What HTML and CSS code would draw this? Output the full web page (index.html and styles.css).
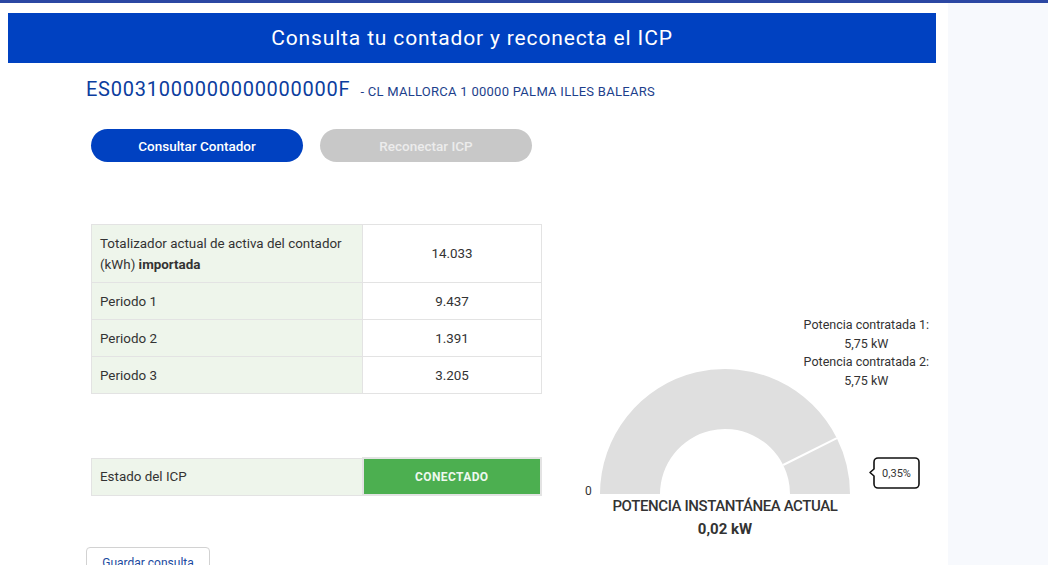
FILE: index.html
```html
<!DOCTYPE html>
<html lang="es">
<head>
<meta charset="utf-8">
<title>Consulta tu contador y reconecta el ICP</title>
<link rel="stylesheet" href="styles.css">
</head>
<body>
<div class="topbar"></div>
<div class="page">
  <main class="main">
    <h1 class="header">Consulta tu contador y reconecta el ICP</h1>
    <div class="supply">
      <span class="cups">ES0031000000000000000F</span>
      <span class="address">- CL MALLORCA 1 00000 PALMA ILLES BALEARS</span>
    </div>
    <div class="actions">
      <button class="pill pill-primary">Consultar Contador</button>
      <button class="pill pill-disabled">Reconectar ICP</button>
    </div>
    <div class="content">
      <div class="left">
        <table class="grid-table readings">
          <tr class="row-tall">
            <th>Totalizador actual de activa del contador (kWh) <b>importada</b></th>
            <td>14.033</td>
          </tr>
          <tr><th>Periodo 1</th><td>9.437</td></tr>
          <tr><th>Periodo 2</th><td>1.391</td></tr>
          <tr><th>Periodo 3</th><td>3.205</td></tr>
        </table>
        <table class="grid-table status">
          <tr><th>Estado del ICP</th><td class="ok">CONECTADO</td></tr>
        </table>
        <button class="save">Guardar consulta</button>
      </div>
      <div class="chart">
        <div class="chart-stack">
          <div class="legend">
            <div class="legend-box">
              <div>Potencia contratada 1:</div>
              <div>5,75 kW</div>
              <div>Potencia contratada 2:</div>
              <div>5,75 kW</div>
            </div>
          </div>
          <svg class="gauge" width="361" height="185" viewBox="0 0 361 185">
            <path d="M25 178 A125 125 0 0 1 261.86 122.22 L208.17 148.99 A65 65 0 0 0 85 178 Z" fill="#dfdfdf"/>
            <path d="M261.86 122.22 A125 125 0 0 1 275 178 L215 178 A65 65 0 0 0 208.17 148.99 Z" fill="#dfdfdf"/>
            <line x1="261.86" y1="122.22" x2="208.17" y2="148.99" stroke="#ffffff" stroke-width="2"/>
            <text x="10" y="179" class="gauge-zero">0</text>
            <path d="M303 142 H340 A4 4 0 0 1 344 146 V168 A4 4 0 0 1 340 172 H303 A4 4 0 0 1 299 168 V160 L295 156.5 L299 153 V146 A4 4 0 0 1 303 142 Z" fill="#ffffff" stroke="#111111" stroke-width="1.6" stroke-linejoin="round"/>
            <text x="321.5" y="161" text-anchor="middle" class="gauge-tip">0,35%</text>
          </svg>
        </div>
        <div class="reading">
          <div class="reading-title">POTENCIA INSTANTÁNEA ACTUAL</div>
          <div class="reading-value">0,02 kW</div>
        </div>
      </div>
    </div>
  </main>
  <aside class="side"></aside>
</div>
</body>
</html>
```
FILE: styles.css
```css
* { box-sizing: border-box; }
html, body { margin: 0; padding: 0; height: 100%; overflow: hidden; }
body {
  font-family: Roboto, "Liberation Sans", Arial, sans-serif;
  color: #333333;
  background: #ffffff;
}
.topbar { height: 3px; background: #2b47a3; }
.page { display: flex; height: 562px; }
.main { width: 936px; padding-top: 10px; }
.side { flex: 1; margin-left: 12px; background: #f7f9fd; }

.header {
  margin: 0 0 0 8px;
  height: 50px;
  background: #0041c1;
  color: #ffffff;
  font-size: 21px;
  font-weight: 400;
  letter-spacing: 0.85px;
  display: flex;
  align-items: center;
  justify-content: center;
}

.supply {
  margin-top: 14px;
  padding-left: 86px;
  display: flex;
  align-items: baseline;
  gap: 10px;
  height: 24px;
}
.cups { font-size: 20px; color: #0b3d9e; letter-spacing: 0.75px; }
.address { font-size: 13px; color: #1d3f8c; letter-spacing: 0.27px; }

.actions {
  margin-top: 28px;
  padding-left: 91px;
  display: flex;
  gap: 17px;
}
.pill {
  width: 212px;
  height: 33px;
  border: none;
  border-radius: 17px;
  font-family: inherit;
  font-size: 13.5px;
  font-weight: 500;
}
.pill-primary { background: #0041c1; color: #ffffff; }
.pill-disabled { background: #c8c8c8; color: #ececec; }

.content {
  margin-top: 62px;
  display: flex;
  gap: 33px;
}
.left { padding-left: 91px; display: flex; flex-direction: column; align-items: flex-start; }

.grid-table {
  width: 451px;
  border-collapse: collapse;
  font-size: 13.4px;
  color: #333333;
}
.grid-table th, .grid-table td {
  border: 1px solid #e3e3e3;
  height: 37px;
  padding: 0 8px;
}
.grid-table th {
  width: 271px;
  background: #eef5eb;
  text-align: left;
  font-weight: 400;
  line-height: 21px;
}
.grid-table th b { font-weight: 700; }
.grid-table td { text-align: center; background: #ffffff; }
.readings .row-tall th, .readings .row-tall td { height: 58px; }

.status { margin-top: 63px; }
.status td.ok {
  background: #4caf50;
  color: #eef8ee;
  font-weight: 700;
  font-size: 12px;
  letter-spacing: 0.4px;
  border: 2px solid #e3e3e3;
}

.save {
  margin-top: 51px;
  margin-left: -5px;
  width: 124px;
  height: 32px;
  background: #ffffff;
  border: 1px solid #d2d2d2;
  border-radius: 4px;
  color: #1b4aa0;
  font-family: inherit;
  font-size: 12px;
  padding: 0;
}

.chart { padding-top: 92px; width: 361px; display: flex; flex-direction: column; }
.chart-stack { display: grid; }
.chart-stack > * { grid-area: 1 / 1; }
.legend { text-align: right; padding-right: 7px; }
.legend-box {
  display: inline-block;
  text-align: center;
  font-size: 12.5px;
  line-height: 18.5px;
  color: #333333;
}
.gauge { display: block; }
.gauge-zero { font-size: 12px; fill: #333333; font-family: Roboto, "Liberation Sans", sans-serif; }
.gauge-tip { font-size: 11px; fill: #333333; font-family: Roboto, "Liberation Sans", sans-serif; }

.reading { width: 300px; text-align: center; color: #333333; margin-top: -5px; }
.reading-title { font-size: 15px; font-weight: 500; line-height: 20px; letter-spacing: -0.4px; }
.reading-value { font-size: 15px; font-weight: 700; line-height: 22px; margin-top: 2px; }
```
